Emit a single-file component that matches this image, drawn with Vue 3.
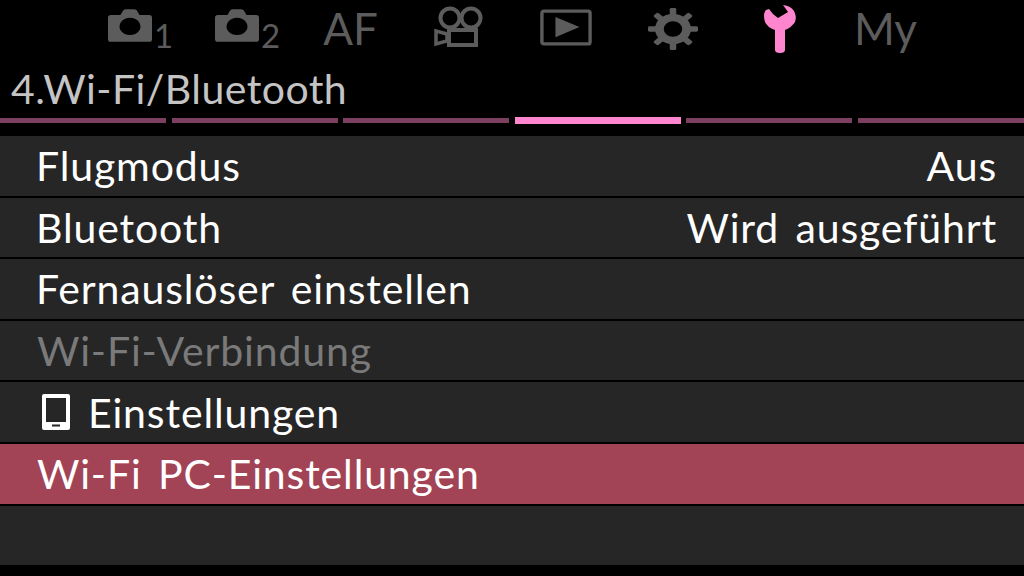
<script setup>
const tabs = [
  { id: "cam1", sub: "1" },
  { id: "cam2", sub: "2" },
  { id: "af", label: "AF" },
  { id: "movie" },
  { id: "play" },
  { id: "gear" },
  { id: "wrench" },
  { id: "my", label: "My" },
];

const segments = [0, 1, 2, 3, 4, 5];
const activeSegment = 3;

const rows = [
  { label: "Flugmodus", value: "Aus" },
  { label: "Bluetooth", value: "Wird ausgeführt" },
  { label: "Fernauslöser einstellen" },
  { label: "Wi-Fi-Verbindung", disabled: true },
  { label: "Einstellungen", phone: true },
  { label: "Wi-Fi PC-Einstellungen", selected: true },
  { label: "" },
];

const gearTeeth = [0, 45, 90, 135, 180, 225, 270, 315];
</script>

<template>
  <div class="screen">
    <nav class="tabs">
      <div v-for="tab in tabs" :key="tab.id" class="tab">
        <template v-if="tab.sub">
          <svg class="cam" viewBox="0 0 46 34" width="44" height="33">
            <path
              fill="#5c5c5c"
              fill-rule="evenodd"
              d="M3 6h10l3-5q1-1 3-1h8q2 0 3 1l3 5h10q3 0 3 3v22q0 3-3 3H3q-3 0-3-3V9q0-3 3-3zM23 9a11 9 0 1 0 .01 0z"
            />
          </svg>
          <span class="sub">{{ tab.sub }}</span>
        </template>
        <span v-else-if="tab.label" class="tab-text">{{ tab.label }}</span>
        <svg v-else-if="tab.id === 'movie'" class="icon-up" viewBox="0 0 52 42" width="52" height="42">
          <g fill="none" stroke="#5c5c5c" stroke-width="4">
            <circle cx="17" cy="12" r="9.5" />
            <circle cx="38" cy="12" r="9.5" />
            <rect x="16" y="24" width="27" height="15" />
            <path d="M14 28 3 25v13l11-3z" stroke-width="3.5" />
          </g>
        </svg>
        <svg v-else-if="tab.id === 'play'" class="icon-up" viewBox="0 0 54 38" width="52" height="37">
          <rect x="2" y="2" width="50" height="34" rx="2" fill="none" stroke="#5c5c5c" stroke-width="3.5" />
          <path d="M16 8v21l25-10.500z" fill="#5c5c5c" />
        </svg>
        <svg
          v-else-if="tab.id === 'gear'"
          class="icon-gear"
          viewBox="2 0 46 46"
          width="50"
          height="42"
          preserveAspectRatio="none"
        >
          <g fill="#5c5c5c">
            <rect
              v-for="deg in gearTeeth"
              :key="deg"
              x="22"
              y="0"
              width="6"
              height="12"
              rx="1.500"
              :transform="`rotate(${deg} 25 23)`"
            />
          </g>
          <circle cx="25" cy="23" r="12.500" fill="none" stroke="#5c5c5c" stroke-width="8" />
        </svg>
        <svg v-else class="icon-wrench" viewBox="0 0 34 50" width="34" height="50">
          <path
            fill="#ff85cf"
            d="M1 11Q1 8 3 6L6 5Q9 10 15 14L25 8 20 1Q28 2 31 7 34 13 32 18 29 23 22 26V46Q22 49 17 49 12 49 12 46V26Q4 23 2 18 1 15 1 11z"
          />
        </svg>
      </div>
    </nav>

    <h1 class="title">4.Wi-Fi/Bluetooth</h1>

    <div class="segments">
      <span
        v-for="seg in segments"
        :key="seg"
        class="segment"
        :class="{ active: seg === activeSegment }"
      ></span>
    </div>

    <ul class="menu">
      <li
        v-for="(row, i) in rows"
        :key="i"
        class="row"
        :class="{ disabled: row.disabled, selected: row.selected }"
      >
        <span class="label">
          <svg v-if="row.phone" class="phone" viewBox="0 0 28 36" width="28" height="36">
            <path
              fill="#fff"
              fill-rule="evenodd"
              d="M2 0h24q2 0 2 2v32q0 2-2 2H2q-2 0-2-2V2q0-2 2-2zM4 4v24h20V4zM10 30.500v2h8v-2z"
            />
          </svg>
          {{ row.label }}
        </span>
        <span v-if="row.value" class="value">{{ row.value }}</span>
      </li>
    </ul>
  </div>
</template>

<style scoped>
.screen {
  width: 1024px;
  height: 576px;
  background: #000;
  overflow: hidden;
  font-family: Lato, "Open Sans", sans-serif;
  color: #fff;
}

.tabs {
  display: flex;
  height: 60px;
  padding-left: 84px;
}

.tab {
  width: 107px;
  height: 60px;
  display: flex;
  align-items: center;
  justify-content: center;
  position: relative;
}

.cam {
  margin-top: -10px;
  margin-left: -16px;
}

.icon-up {
  margin-top: -6px;
}

.icon-gear {
  margin-top: -2px;
}

.icon-wrench {
  margin-top: -2px;
}

.sub {
  position: absolute;
  left: 70px;
  top: 15px;
  font-size: 33px;
  line-height: 40px;
  color: #5c5c5c;
}

.tab-text {
  font-size: 44px;
  line-height: 60px;
  margin: -4px 2px 0 0;
  color: #5c5c5c;
}

.title {
  margin: 0;
  padding-left: 11px;
  height: 58px;
  font-size: 41px;
  line-height: 58px;
  font-weight: 400;
  letter-spacing: 0.45px;
  color: #c4c4c4;
  white-space: nowrap;
}

.segments {
  display: flex;
  gap: 5.6px;
  height: 18px;
  align-items: flex-start;
}

.segment {
  width: 166.3px;
  height: 5px;
  background: #7d3f5f;
}

.segment.active {
  height: 7px;
  margin-top: -1px;
  background: #ff85cf;
}

.menu {
  list-style: none;
  margin: 0;
  padding: 0;
  display: flex;
  flex-direction: column;
  gap: 2px;
}

.row {
  height: 59.6px;
  display: flex;
  align-items: center;
  justify-content: space-between;
  padding: 0 27px 0 36px;
  background: #262626;
  font-size: 41px;
  letter-spacing: 0.85px;
  word-spacing: 5px;
  white-space: nowrap;
}

.row.disabled {
  color: #7a7a7a;
  padding-left: 37px;
}

.row.selected {
  background: #a24455;
  padding-left: 37px;
}

.label {
  display: flex;
  align-items: center;
  gap: 18px;
}

.phone {
  margin-left: 6px;
}
</style>

<style>
html,
body {
  background: #000;
}
</style>
